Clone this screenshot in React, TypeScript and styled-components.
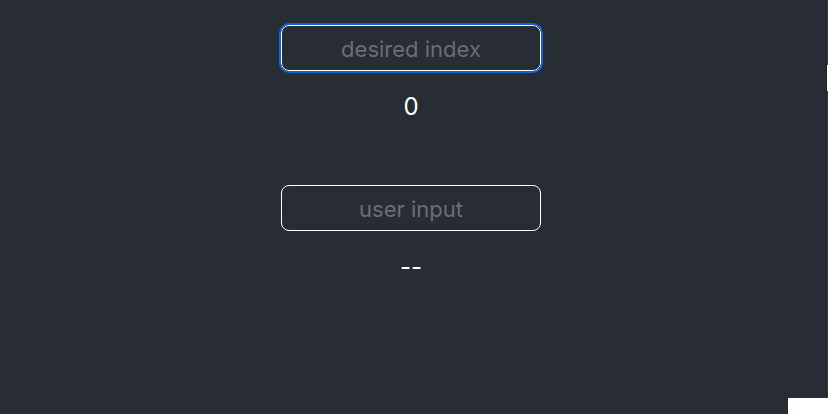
import React from "react";
import styled, { createGlobalStyle } from "styled-components";

const GlobalStyle = createGlobalStyle`
  html, body {
    margin: 0;
    padding: 0;
    background: #282c34;
    height: 100%;
    overflow: hidden;
  }
  * { box-sizing: border-box; }
`;

const Page = styled.main`
  width: 822px;
  min-height: 414px;
  padding-top: 25px;
  display: flex;
  flex-direction: column;
  align-items: center;
  gap: 63px;
  font-family: Inter, "Noto Sans", sans-serif;
`;

const Field = styled.section`
  display: flex;
  flex-direction: column;
  align-items: center;
  gap: 21px;
`;

const TextInput = styled.input<{ $focused?: boolean }>`
  width: 260px;
  height: 46px;
  border: 1px solid #ffffff;
  border-radius: 8px;
  background: #282c34;
  color: #ffffff;
  font-family: Inter, "Noto Sans", sans-serif;
  font-size: 22px;
  font-weight: 400;
  text-align: center;
  padding: 2px 10px 0;
  outline: ${(p) => (p.$focused ? "2px solid #0a66d6" : "none")};
  outline-offset: 0;
  &::placeholder {
    color: #6c6d70;
  }
`;

const Result = styled.div`
  color: #ffffff;
  font-size: 24px;
  line-height: 30px;
  height: 30px;
`;

const EdgeStrip = styled.div`
  position: fixed;
  top: 0;
  right: 0;
  width: 2px;
  height: 398px;
  border-left: 1px solid #1d2026;
  background: linear-gradient(
    to bottom,
    #3b3f46 0px,
    #3b3f46 65px,
    #ffffff 65px,
    #ffffff 91px,
    #3b3f46 91px
  );
`;

const CornerBlock = styled.div`
  position: fixed;
  right: 0;
  bottom: 0;
  width: 40px;
  height: 16px;
  background: #ffffff;
`;

export default function App() {
  return (
    <>
      <GlobalStyle />
      <Page>
        <Field>
          <TextInput $focused placeholder="desired index" />
          <Result>0</Result>
        </Field>
        <Field>
          <TextInput placeholder="user input" />
          <Result>--</Result>
        </Field>
      </Page>
      <EdgeStrip />
      <CornerBlock />
    </>
  );
}
